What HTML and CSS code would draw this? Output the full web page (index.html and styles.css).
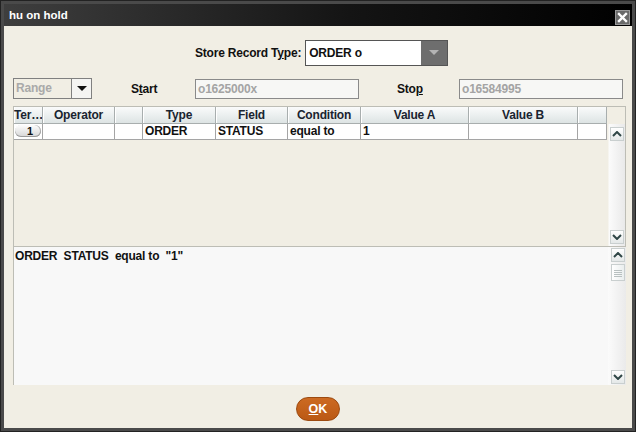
FILE: index.html
```html
<!DOCTYPE html>
<html lang="en">
<head>
  <meta charset="UTF-8">
  <title>hu on hold</title>
  <link rel="stylesheet" href="styles.css">
</head>
<body>
  <div class="window">
    <div class="titlebar">
      <span class="title">hu on hold</span>
      <span class="close">
        <svg width="15" height="15" viewBox="0 0 15 15">
          <path d="M4 4 L11 11 M11 4 L4 11" stroke="#fff" stroke-width="2.4" stroke-linecap="square"/>
        </svg>
      </span>
    </div>

    <div class="content">
      <div class="type-row">
        <span class="lbl">Store Record T<u>y</u>pe:</span>
        <div class="combo">
          <span class="combo-text">ORDER o</span>
          <span class="combo-btn">
            <svg width="10" height="6" viewBox="0 0 10 6"><path d="M0 0 H10 L5 5 Z" fill="#b4b4b4"/></svg>
          </span>
        </div>
      </div>

      <div class="range-row">
        <div class="range-combo">
          <span class="range-text">Range</span>
          <span class="range-btn">
            <svg width="10" height="6" viewBox="0 0 10 6"><path d="M0 0 H10 L5 5 Z" fill="#111"/></svg>
          </span>
        </div>
        <span class="lbl lbl-start">S<u>t</u>art</span>
        <div class="field">o1625000x</div>
        <span class="lbl lbl-stop">Sto<u>p</u></span>
        <div class="field">o16584995</div>
      </div>

      <div class="table-pane">
        <div class="table-main">
          <div class="thead">
            <div class="th">Ter…</div>
            <div class="th">Operator</div>
            <div class="th"></div>
            <div class="th">Type</div>
            <div class="th">Field</div>
            <div class="th">Condition</div>
            <div class="th">Value A</div>
            <div class="th">Value B</div>
            <div class="th"></div>
          </div>
          <div class="trow">
            <div class="td td-num"><span class="num-btn">1</span></div>
            <div class="td"></div>
            <div class="td"></div>
            <div class="td">ORDER</div>
            <div class="td">STATUS</div>
            <div class="td">equal to</div>
            <div class="td">1</div>
            <div class="td"></div>
            <div class="td"></div>
          </div>
        </div>
        <div class="table-side">
          <div class="corner"></div>
          <div class="vscroll">
            <span class="sbtn">
              <svg width="10" height="6" viewBox="0 0 10 6"><path d="M1 5 L5 1 L9 5" stroke="#2f4646" stroke-width="2" fill="none"/></svg>
            </span>
            <span class="track"></span>
            <span class="sbtn">
              <svg width="10" height="6" viewBox="0 0 10 6"><path d="M1 1 L5 5 L9 1" stroke="#2f4646" stroke-width="2" fill="none"/></svg>
            </span>
          </div>
        </div>
      </div>

      <div class="text-pane">
        <div class="text">ORDER  STATUS  equal to  "1"</div>
        <div class="vscroll text-scroll">
          <span class="sbtn">
            <svg width="10" height="6" viewBox="0 0 10 6"><path d="M1 5 L5 1 L9 5" stroke="#2f4646" stroke-width="2" fill="none"/></svg>
          </span>
          <span class="thumb">
            <svg width="8" height="8" viewBox="0 0 8 8"><path d="M0 1.5 H8 M0 3.5 H8 M0 5.5 H8 M0 7.5 H8" stroke="#b8c0c0" stroke-width="1"/></svg>
          </span>
          <span class="track"></span>
          <span class="sbtn">
            <svg width="10" height="6" viewBox="0 0 10 6"><path d="M1 1 L5 5 L9 1" stroke="#2f4646" stroke-width="2" fill="none"/></svg>
          </span>
        </div>
      </div>

      <div class="buttons">
        <button class="ok"><u>O</u>K</button>
      </div>
    </div>
  </div>
</body>
</html>
```

FILE: styles.css
```css
body {
  margin: 0;
  font-family: "Liberation Sans", Arial, sans-serif;
  font-size: 12px;
  letter-spacing: -0.2px;
  font-weight: bold;
  color: #111;
}

.window {
  width: 636px;
  height: 432px;
  box-sizing: border-box;
  border: 4px solid #4a4a4a;
  outline: 1px solid #222;
  outline-offset: -1px;
  display: flex;
  flex-direction: column;
  background: #f1eee4;
}

.titlebar {
  height: 22px;
  flex: none;
  display: flex;
  align-items: center;
  justify-content: space-between;
  padding: 0 2px 0 5px;
  background: linear-gradient(to right, #3e3e3e, #141414 55%, #000);
  color: #fff;
  font-size: 11.5px;
  letter-spacing: 0;
}

.close {
  width: 15px;
  height: 15px;
  margin-top: 4px;
  background: #6a6a6a;
  box-shadow: inset 0 0 0 1px #9a9a9a;
  display: flex;
}

.content {
  flex: 1;
  display: flex;
  flex-direction: column;
  padding: 14px 0 0 9px;
}

.lbl {
  white-space: nowrap;
}

.type-row {
  display: flex;
  align-items: center;
  height: 26px;
  padding-left: 182px;
  gap: 4px;
}

.combo {
  width: 143px;
  height: 26px;
  box-sizing: border-box;
  border: 1px solid #555;
  display: flex;
  background: #fff;
}

.combo-text {
  flex: 1;
  padding-left: 3px;
  line-height: 24px;
}

.combo-btn {
  width: 26px;
  background: #6e6e6e;
  display: flex;
  align-items: center;
  justify-content: center;
}

.range-row {
  display: flex;
  align-items: center;
  height: 21px;
  margin-top: 12px;
}

.range-combo {
  width: 79px;
  height: 21px;
  box-sizing: border-box;
  border: 1px solid #808080;
  display: flex;
  background: #f1eee4;
}

.range-text {
  flex: 1;
  color: #a9a9a9;
  padding-left: 2px;
  line-height: 19px;
}

.range-btn {
  width: 19px;
  border-left: 1px solid #808080;
  background: #f4f4f2;
  display: flex;
  align-items: center;
  justify-content: center;
}

.lbl-start {
  margin-left: 39px;
  width: 64px;
}

.lbl-stop {
  margin-left: 38px;
  width: 62px;
}

.field {
  width: 164px;
  height: 20px;
  box-sizing: border-box;
  border: 1px solid #8a8a8a;
  background: #f7f7f5;
  color: #a4a4a4;
  padding-left: 2px;
  line-height: 18px;
}

.table-pane {
  margin-top: 7px;
  width: 613px;
  height: 140px;
  box-sizing: border-box;
  border: 1px solid #bdbdb5;
  border-bottom: none;
  display: flex;
}

.table-main {
  width: 593px;
}

.thead,
.trow {
  display: grid;
  grid-template-columns: 29px 72px 28px 73px 72px 73px 108px 109px 29px;
}

.th {
  height: 17px;
  box-sizing: border-box;
  background: linear-gradient(#fafbfb, #dde4e4);
  border-right: 1px solid #a8aeae;
  border-bottom: 1px solid #a8aeae;
  box-shadow: inset 1px 0 0 #fff;
  text-align: center;
  line-height: 16px;
  color: #1a2430;
  overflow: hidden;
  white-space: nowrap;
}

.td {
  height: 16px;
  box-sizing: border-box;
  background: #fff;
  border-right: 1px solid #a5a5a5;
  border-bottom: 1px solid #a5a5a5;
  padding-left: 2px;
  line-height: 15px;
  white-space: nowrap;
}

.td-num {
  padding: 1px 1px 0 1px;
  background: #fff;
}

.num-btn {
  display: block;
  height: 12px;
  border-radius: 6px;
  background: linear-gradient(#fdfdfd, #d6d6d6);
  box-shadow: inset 0 -1px 0 #9a9a9a, inset -1px 0 0 #b0b0b0;
  text-align: center;
  line-height: 13px;
  font-size: 11px;
  padding-left: 4px;
}

.table-side {
  flex: 1;
  display: flex;
  flex-direction: column;
}

.corner {
  height: 17px;
}

.vscroll {
  flex: 1;
  display: flex;
  flex-direction: column;
  align-items: flex-end;
  padding: 3px 1px 2px 0;
  background: linear-gradient(to right, #f1eee4 1px, #fbfbfb 2px, #e9e9e9);
}

.sbtn {
  width: 14px;
  height: 14px;
  box-sizing: border-box;
  border: 1px solid #c9cfcf;
  background: linear-gradient(#ffffff, #e4e8e8);
  display: flex;
  align-items: center;
  justify-content: center;
}

.track {
  flex: 1;
}

.thumb {
  width: 14px;
  height: 17px;
  margin-top: 2px;
  box-sizing: border-box;
  border: 1px solid #c9cfcf;
  background: linear-gradient(to right, #ffffff, #eaeeee);
  display: flex;
  align-items: center;
  justify-content: center;
}

.text-pane {
  width: 613px;
  height: 139px;
  box-sizing: border-box;
  border-top: 1px solid #bdbdb5;
  border-left: 1px solid #bdbdb5;
  background: #f8f8f8;
  display: flex;
}

.text {
  flex: 1;
  white-space: pre;
  padding: 2px 0 0 1px;
}

.text-scroll {
  flex: none;
  width: 17px;
  padding: 1px 1px 1px 0;
  background: linear-gradient(to right, #fbfbfb, #eaeaea);
}

.buttons {
  display: flex;
  justify-content: center;
  margin-top: 12px;
  padding-right: 9px;
}

.ok {
  width: 44px;
  height: 24px;
  border: 1px solid #9c4a10;
  border-radius: 12px;
  background: linear-gradient(#cc6a22, #bb5914);
  color: #fff;
  font-family: "Liberation Sans", Arial, sans-serif;
  font-weight: bold;
  font-size: 12.5px;
  padding: 0;
}
```
